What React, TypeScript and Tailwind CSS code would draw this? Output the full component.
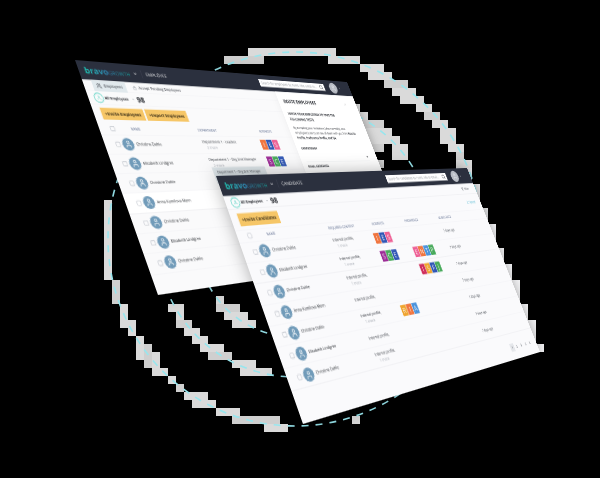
import type { CSSProperties, ReactNode } from 'react';
import { ChevronDown, Filter, Lock, Search, User, Users, X } from 'lucide-react';

type Point = [number, number];

/* Size of a window after it is reduced to 30%, before it is projected */
const PANEL_W = 360;
const PANEL_H = 216;

/* Perspective matrix that maps a flat window onto four corners: TL, TR, BR, BL. */
function project([p0, p1, p2, p3]: [Point, Point, Point, Point]): CSSProperties {
  const ax = p1[0] - p2[0];
  const ay = p1[1] - p2[1];
  const bx = p3[0] - p2[0];
  const by = p3[1] - p2[1];
  const sx = p0[0] - p1[0] + p2[0] - p3[0];
  const sy = p0[1] - p1[1] + p2[1] - p3[1];
  const det = ax * by - ay * bx;
  const g = (sx * by - sy * bx) / det;
  const h = (ax * sy - ay * sx) / det;
  const m = [
    (p1[0] - p0[0] + g * p1[0]) / PANEL_W, (p1[1] - p0[1] + g * p1[1]) / PANEL_W, 0, g / PANEL_W,
    (p3[0] - p0[0] + h * p3[0]) / PANEL_H, (p3[1] - p0[1] + h * p3[1]) / PANEL_H, 0, h / PANEL_H,
    0, 0, 1, 0,
    p0[0], p0[1], 0, 1,
  ];
  return { transform: `matrix3d(${m.join(',')})` };
}

/* Grey cells behind the rings: x, y, width, height */
const cells: number[][] = [
  [104, 200, 8, 80], [112, 280, 8, 24], [120, 304, 8, 24], [128, 320, 8, 16], [136, 336, 8, 24],
  [144, 344, 8, 24], [152, 352, 8, 24], [160, 368, 8, 8], [168, 376, 8, 8], [176, 384, 8, 8],
  [184, 392, 24, 8], [192, 400, 24, 8], [216, 408, 24, 8], [232, 416, 48, 8], [264, 424, 24, 8],
  [168, 304, 16, 8], [176, 312, 8, 8], [176, 320, 16, 8], [184, 328, 16, 8], [192, 336, 16, 8],
  [200, 344, 24, 8], [208, 352, 24, 8], [232, 360, 24, 8], [240, 368, 32, 8],
  [216, 296, 8, 8], [216, 304, 24, 8], [224, 312, 24, 8], [232, 320, 24, 8],
  [248, 48, 88, 8], [224, 56, 40, 8], [328, 56, 32, 8], [360, 64, 24, 8], [368, 72, 24, 8],
  [384, 80, 24, 8], [392, 88, 24, 8], [400, 96, 24, 8], [416, 104, 16, 8], [424, 112, 16, 8],
  [432, 120, 16, 8], [440, 128, 16, 16], [448, 144, 16, 8], [456, 152, 8, 8], [456, 160, 16, 8],
  [348, 104, 12, 8], [348, 112, 20, 8], [352, 120, 32, 8], [360, 128, 32, 8], [360, 136, 24, 8],
  [376, 136, 24, 8], [368, 144, 16, 8], [392, 144, 16, 16], [372, 160, 12, 8], [352, 416, 8, 8],
];

/* Pale cells along the right edge of the front window */
const edge: number[][] = [
  [456, 168, 16, 16], [460, 184, 20, 24], [464, 208, 24, 16], [472, 224, 24, 24], [480, 248, 24, 16],
  [488, 264, 24, 16], [496, 280, 24, 24], [504, 304, 24, 16], [512, 320, 24, 24], [520, 344, 24, 8],
];

const tileColors: Record<string, string> = {
  orange: 'bg-[#f0753f]',
  blue: 'bg-[#3057b5]',
  pink: 'bg-[#ee5f94]',
  purple: 'bg-[#9c2c96]',
  green: 'bg-[#48aa5b]',
  red: 'bg-[#d02f5c]',
  amber: 'bg-[#efa42e]',
  sky: 'bg-[#4b93dc]',
};

type Tile = [string, string];
const IES: Tile[] = [['I', 'orange'], ['E', 'blue'], ['S', 'pink']];
const SCE: Tile[] = [['S', 'purple'], ['C', 'green'], ['E', 'blue']];
const ENTP: Tile[] = [['E', 'pink'], ['N', 'orange'], ['T', 'sky'], ['P', 'green']];
const ISFJ: Tile[] = [['I', 'red'], ['S', 'amber'], ['F', 'blue'], ['J', 'green']];
const RIA: Tile[] = [['R', 'amber'], ['I', 'orange'], ['A', 'sky']];

function Tiles({ items }: { items?: Tile[] }) {
  if (!items) return null;
  return (
    <div className="flex gap-0.5">
      {items.map(([letter, color]) => (
        <span key={letter} className={`flex h-9 w-[26px] items-center justify-center text-2xl font-medium text-white ${tileColors[color]}`}>
          {letter}
        </span>
      ))}
    </div>
  );
}

function Check({ label }: { label: string }) {
  return (
    <input type="checkbox" aria-label={label} className="ml-[38px] block size-4 appearance-none rounded-sm border-2 border-[#c3c7ce]" />
  );
}

function Person({ name }: { name: string }) {
  return (
    <div className="flex items-center gap-2 text-[13px] font-medium text-[#202429]">
      <span className="flex size-10 items-center justify-center rounded-full bg-[#719bb9] text-white">
        <User size={27} strokeWidth={2} />
      </span>
      {name}
    </div>
  );
}

function Header({ section, hint }: { section: string; hint: string }) {
  return (
    <header className="flex h-[61px] items-center bg-[#2b303e] pl-5 pr-14 text-white">
      <span className="flex items-baseline bg-linear-to-r from-[#20c5b5] via-[#2f7fae] to-[#159c93] bg-clip-text text-transparent">
        <span className="text-[28px] font-bold leading-8">bravo</span>
        <span className="text-lg">GROWTH</span>
      </span>
      <ChevronDown size={14} className="ml-3" strokeWidth={3} />
      <span className="ml-4 h-7 border-l border-[#4c5261] pl-4 text-base leading-7">{section}</span>
      <label className="ml-auto flex h-7 w-[334px] items-center bg-white px-2 text-[#30343e]">
        <input type="search" aria-label={hint} placeholder={hint} className="min-w-0 flex-1 text-[13px] outline-none placeholder:text-[#85898f]" />
        <Search size={20} strokeWidth={2} />
      </label>
      <button aria-label="Account" className="ml-7 flex items-center gap-2">
        <span className="flex size-11 items-center justify-center rounded-full bg-[#b9bdc5] text-[#eef0f3]">
          <User size={26} />
        </span>
        <ChevronDown size={10} />
      </button>
    </header>
  );
}

function Summary({ children }: { children?: ReactNode }) {
  return (
    <div className="flex h-[42px] items-center border-b border-[#e9eaee] pl-5 pr-10">
      <span className="flex size-8 items-center justify-center rounded-full border-2 border-[#46cdbb] text-[#46cdbb]">
        <User size={15} />
      </span>
      <button className="ml-1 flex items-center gap-3 text-xs font-bold text-[#1d2026]">
        All Employees
        <ChevronDown size={11} className="text-[#8b9099]" />
      </button>
      <strong className="ml-2 text-2xl text-[#1d2026]">98</strong>
      <div className="ml-auto">{children}</div>
    </div>
  );
}

function Action({ children }: { children: ReactNode }) {
  return <button className="h-[38px] bg-[#f6c667] px-3 text-sm font-bold text-[#3b2f18]">{children}</button>;
}

const headCell = 'text-left text-xs font-medium text-[#4a5b80]';
const names = [
  'Christine Dahle', 'Elisabeth Lindgren', 'Christine Dahle', 'Anna Kamilova Mørn',
  'Christine Dahle', 'Elisabeth Lindgren', 'Christine Dahle',
];

function EmployeesWindow() {
  const departments = ['Department 1 - Leaders', 'Department 1 - Org Unit Manager', 'Department 1 - Org Unit Manager'];
  const interests = [IES, SCE];
  return (
    <section className="relative h-[720px] w-[1200px] overflow-hidden bg-[#fafafb]">
      <Header section="EMPLOYEE" hint="Search for employees by name, title, email or..." />
      <nav className="flex h-9 items-center border-b border-[#e9eaee] pl-[30px] text-[13px] font-medium text-[#2a2e36]">
        <a href="#employees" className="flex h-9 items-center gap-2 bg-[#e1e9ed] px-3">
          <Users size={18} />
          Employees
        </a>
        <a href="#pending" className="ml-6 flex items-center gap-2">
          <Lock size={14} className="text-[#9aa0a8]" />
          Accept Pending Employees
        </a>
      </nav>
      <Summary />
      <div className="flex h-[58px] items-center gap-1.5 pl-[26px]">
        <Action>+Invite Employees</Action>
        <Action>+Import Employees</Action>
      </div>
      <table className="w-full table-fixed">
        <colgroup>
          <col className="w-[61px]" />
          <col className="w-[303px]" />
          <col className="w-[253px]" />
          <col />
        </colgroup>
        <thead>
          <tr className="h-9 border-b border-[#e9eaee]">
            <th className="p-0"><Check label="Select all employees" /></th>
            <th className={`${headCell} pl-12`}>NAME</th>
            <th className={headCell}>DEPARTMENT</th>
            <th className={`${headCell} pl-3`}>INTERESTS</th>
          </tr>
        </thead>
        <tbody>
          {names.map((name, i) => (
            <tr key={i} className={`h-[61px] border-b border-[#e9eaee] ${i === 3 ? 'bg-white' : ''}`}>
              <td className="p-0"><Check label={`Select ${name}`} /></td>
              <td className="p-0"><Person name={name} /></td>
              <td className="p-0 text-[13px] leading-5 text-[#2d3138]">
                {i === 2 ? (
                  <div className="-mt-8 h-14 w-[230px] bg-[#dce4e8] py-2 pl-4 text-xs">{departments[i]}</div>
                ) : i < 2 ? (
                  <>
                    <div className="whitespace-nowrap">{departments[i]}</div>
                    <div className="pl-3 text-[#9ca1aa]">2 more</div>
                  </>
                ) : null}
              </td>
              <td className="p-0"><Tiles items={interests[i]} /></td>
            </tr>
          ))}
        </tbody>
      </table>
      <aside className="absolute bottom-0 right-0 top-[61px] w-[420px] bg-white px-6 pt-6 text-[#24272d] shadow-[0_0_40px_rgba(0,0,0,0.05)]">
        <div className="flex items-center justify-between pr-8">
          <h2 className="text-lg font-bold leading-6">INVITE EMPLOYEES</h2>
          <button aria-label="Close"><X size={17} strokeWidth={1} /></button>
        </div>
        <h3 className="mt-6 w-[300px] text-[13px] font-bold leading-[22px]">INVITE YOUR EMPLOYEES TO TAKE THE FOLLOWING TESTS:</h3>
        <p className="mt-3 text-xs leading-[19px]">
          By accepting your invitations (also currently), new
          <br />
          employees (users) can see all (team with you from <b>Results</b>
          <br />
          <b>Profile, Preference Profile, and Q4.</b>
        </p>
        <label className="mt-6 block text-xs font-bold">
          DEPARTMENT
          <select className="mt-2 block h-9 w-[350px] border-b border-[#dcdfe4] bg-white" />
        </label>
        <label className="mt-2 block text-xs font-bold">
          EMAIL ADDRESSES
          <input type="email" className="mt-2 block h-9 w-[350px] border-b border-[#dcdfe4]" />
        </label>
      </aside>
    </section>
  );
}

function CandidatesWindow() {
  const interests = [IES, SCE, undefined, undefined, RIA];
  const preferences = [undefined, ENTP, ISFJ];
  return (
    <section className="relative h-[720px] w-[1200px] overflow-hidden bg-[#fafafc]">
      <Header section="CANDIDATE" hint="Search for candidates by name, title or email..." />
      <Summary>
        <button className="flex items-center gap-1 text-xs text-[#3d424a]">
          <Filter size={14} />
          Filter
        </button>
      </Summary>
      <div className="flex h-[61px] items-center justify-between pl-[26px] pr-8">
        <Action>+Invite Candidates</Action>
        <a href="#upload" className="text-xs font-medium text-[#35aecb]">↥ Upload</a>
      </div>
      <table className="w-full table-fixed">
        <colgroup>
          <col className="w-[61px]" />
          <col className="w-[303px]" />
          <col className="w-[189px]" />
          <col className="w-[166px]" />
          <col className="w-[197px]" />
          <col />
        </colgroup>
        <thead>
          <tr className="h-9 border-y border-[#e9eaee]">
            <th className="p-0"><Check label="Select all candidates" /></th>
            <th className={`${headCell} pl-12`}>NAME</th>
            <th className={headCell}>REQUIRED CONTENT</th>
            <th className={`${headCell} pl-3`}>INTERESTS</th>
            <th className={`${headCell} pl-3`}>PREFERENCE</th>
            <th className={headCell}>ADDED DATE</th>
          </tr>
        </thead>
        <tbody>
          {names.map((name, i) => (
            <tr key={i} className="h-[61px] border-b border-[#e9eaee]">
              <td className="p-0"><Check label={`Select ${name}`} /></td>
              <td className="p-0"><Person name={name} /></td>
              <td className="p-0 text-[13px] leading-5 text-[#2d3138]">
                <div>Internal profile,</div>
                {i !== 3 && i !== 5 && <div className="pl-3 text-[#9ca1aa]">1 more</div>}
              </td>
              <td className="p-0"><Tiles items={interests[i]} /></td>
              <td className="p-0"><Tiles items={preferences[i]} /></td>
              <td className="p-0 text-[13px] text-[#3d424a]">7 days ago</td>
            </tr>
          ))}
        </tbody>
      </table>
      <nav aria-label="Pages" className="mt-9 flex justify-end gap-1 pr-7 text-sm text-[#565b64]">
        {[1, 2, 3, 4, 5].map((page) => (
          <a key={page} href={`#page-${page}`} className={`w-6 text-center leading-7 ${page === 1 ? 'bg-[#e4e6ea]' : ''}`}>
            {page}
          </a>
        ))}
      </nav>
    </section>
  );
}

function Rings() {
  return (
    <svg viewBox="0 0 600 478" className="absolute inset-0 size-full" aria-hidden="true">
      <g shapeRendering="crispEdges">
        {cells.map(([x, y, w, h], i) => (
          <rect key={i} x={x} y={y} width={w} height={h} fill={i % 4 === 1 ? '#cfcfcf' : '#dadada'} />
        ))}
        {edge.map(([x, y, w, h], i) => (
          <rect key={i} x={x} y={y} width={w} height={h} fill={i < 3 ? '#dfe0e2' : '#f1f1f3'} />
        ))}
      </g>
      <g fill="none" stroke="#98e6ee" strokeWidth="1.6" strokeDasharray="7 7">
        <circle cx="295" cy="239" r="187" />
        <circle cx="295" cy="239" r="138" />
        <circle cx="295" cy="239" r="98" />
      </g>
    </svg>
  );
}

function Projected({ corners, children }: { corners: [Point, Point, Point, Point]; children: ReactNode }) {
  return (
    <div
      className="absolute left-0 top-0 h-[216px] w-[360px] origin-top-left drop-shadow-[0_0_9px_rgba(0,0,0,0.3)]"
      style={project(corners)}
    >
      <div className="origin-top-left scale-30">{children}</div>
    </div>
  );
}

export default function App() {
  return (
    <main className="flex min-h-screen items-center justify-center overflow-hidden bg-black font-['Open_Sans','Liberation_Sans',sans-serif]">
      <div className="relative h-[478px] w-[600px] shrink-0">
        <Rings />
        <Projected corners={[[75, 60], [347, 82], [416, 257], [158, 295]]}>
          <EmployeesWindow />
        </Projected>
        <Projected corners={[[216, 176], [467, 168], [540, 352], [303, 424]]}>
          <CandidatesWindow />
        </Projected>
      </div>
    </main>
  );
}
